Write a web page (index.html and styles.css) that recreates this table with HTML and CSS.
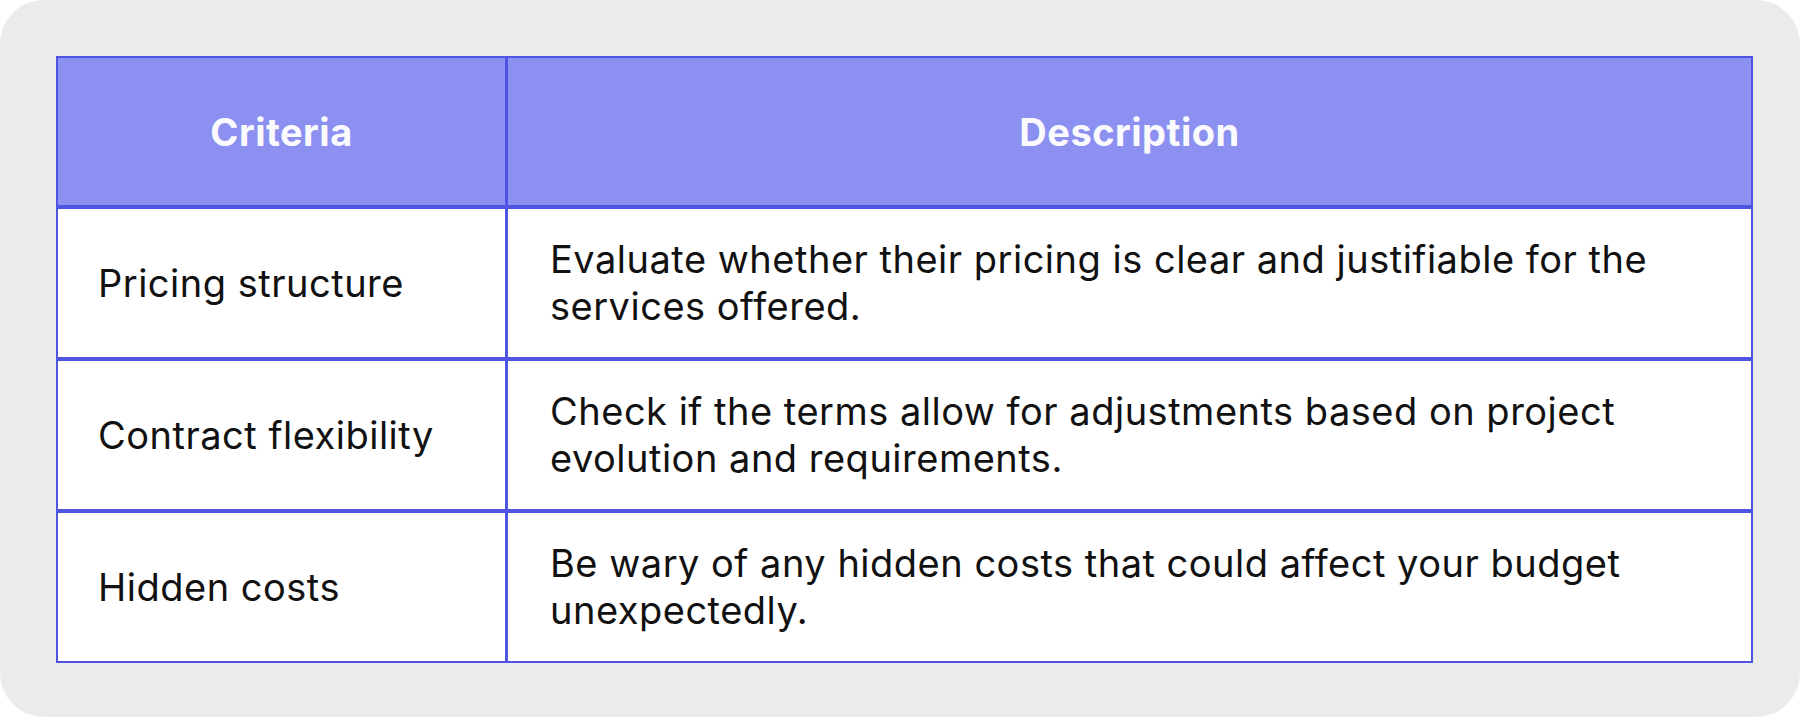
FILE: index.html
```html
<!DOCTYPE html>
<html lang="en">
<head>
<meta charset="utf-8">
<title>Criteria table</title>
<link rel="stylesheet" href="styles.css">
</head>
<body>
<main class="card">
  <table class="criteria-table">
    <colgroup>
      <col class="col-criteria">
      <col class="col-description">
    </colgroup>
    <thead>
      <tr class="head-row">
        <th>Criteria</th>
        <th>Description</th>
      </tr>
    </thead>
    <tbody>
      <tr class="body-row">
        <td>Pricing structure</td>
        <td>Evaluate whether their pricing is clear and justifiable for the services offered.</td>
      </tr>
      <tr class="body-row">
        <td>Contract flexibility</td>
        <td>Check if the terms allow for adjustments based on project evolution and requirements.</td>
      </tr>
      <tr class="body-row">
        <td>Hidden costs</td>
        <td>Be wary of any hidden costs that could affect your budget unexpectedly.</td>
      </tr>
    </tbody>
  </table>
</main>
</body>
</html>
```
FILE: styles.css
```css
* {
  box-sizing: border-box;
}

html, body {
  margin: 0;
  padding: 0;
  background: #ffffff;
}

body {
  width: 1800px;
  height: 717px;
  font-family: "Inter", "Noto Sans", "Liberation Sans", sans-serif;
}

.card {
  width: 1800px;
  height: 717px;
  background: #ebebeb;
  border-radius: 44px;
  padding: 56px 47px 56px 56px;
}

.criteria-table {
  width: 1697px;
  border-collapse: separate;
  border-spacing: 0;
  table-layout: fixed;
}

.col-criteria {
  width: 450px;
}

.criteria-table th,
.criteria-table td {
  border: 2px solid #5054e2;
  padding: 0 42px;
  vertical-align: middle;
}

.criteria-table th:first-child,
.criteria-table td:first-child {
  border-right-width: 1px;
}

.criteria-table td:first-child {
  padding-left: 40px;
}

.criteria-table th {
  background: #8c91f1;
  color: #fbfbff;
  font-weight: 700;
  font-size: 38px;
  text-align: center;
  letter-spacing: 0.5px;
}

.criteria-table td {
  background: #ffffff;
  color: #111111;
  font-weight: 400;
  font-size: 38px;
  line-height: 47px;
  text-align: left;
  letter-spacing: 0.5px;
}

.head-row {
  height: 151px;
}

.body-row {
  height: 152px;
}
```
